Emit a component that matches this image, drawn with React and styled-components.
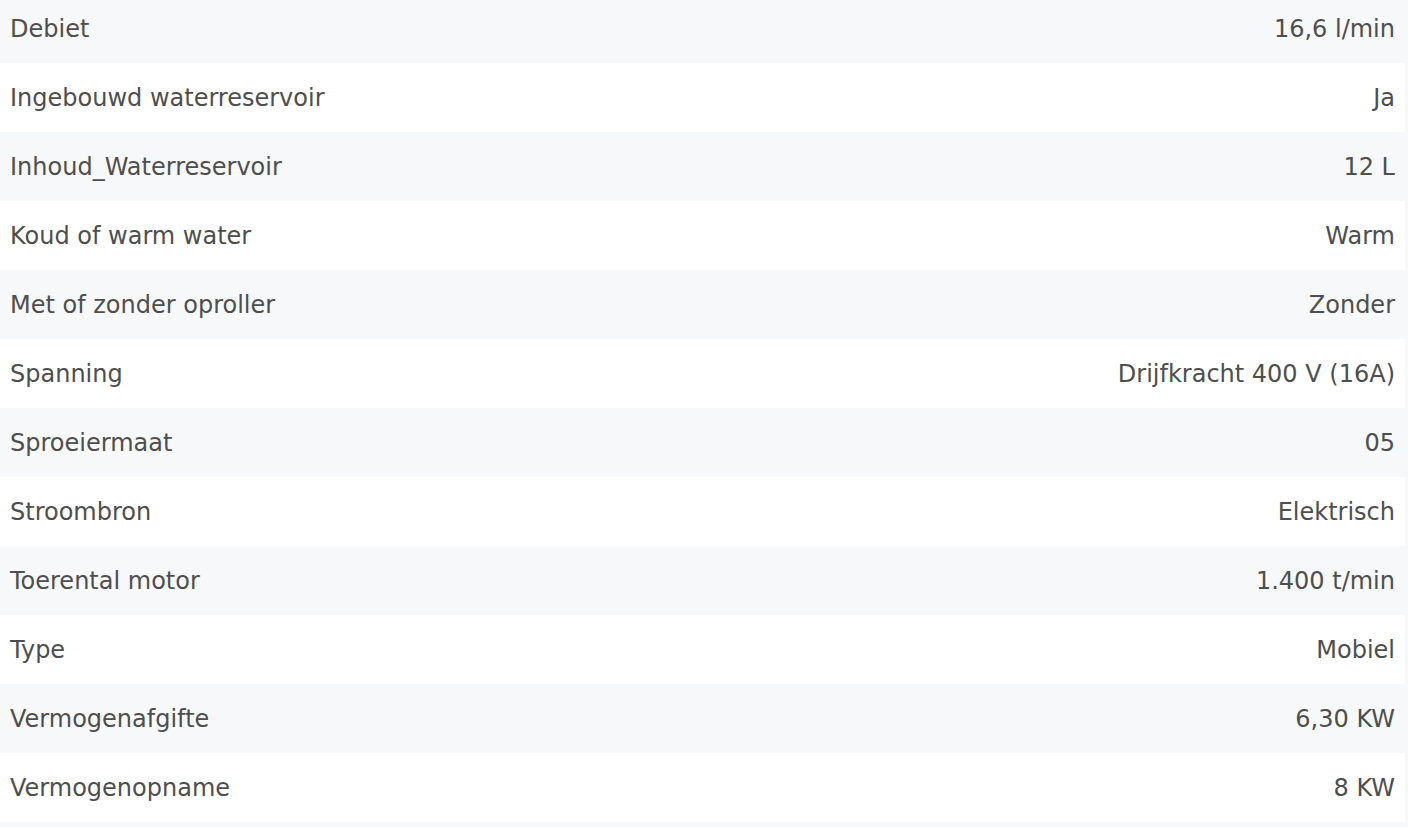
import React from "react";
import styled, { createGlobalStyle } from "styled-components";

const specs = [
  ["Debiet", "16,6 l/min"],
  ["Ingebouwd waterreservoir", "Ja"],
  ["Inhoud_Waterreservoir", "12 L"],
  ["Koud of warm water", "Warm"],
  ["Met of zonder oproller", "Zonder"],
  ["Spanning", "Drijfkracht 400 V (16A)"],
  ["Sproeiermaat", "05"],
  ["Stroombron", "Elektrisch"],
  ["Toerental motor", "1.400 t/min"],
  ["Type", "Mobiel"],
  ["Vermogenafgifte", "6,30 KW"],
  ["Vermogenopname", "8 KW"],
];

function App() {
  return (
    <>
      <GlobalStyle />
      <Table>
        {specs.map(([label, value], i) => (
          <Row key={label} $striped={i % 2 === 0}>
            <Label>{label}</Label>
            <Value>{value}</Value>
          </Row>
        ))}
      </Table>
    </>
  );
}

export default App;

const GlobalStyle = createGlobalStyle`
  html, body {
    margin: 0;
    padding: 0;
    background: #f7f8fa;
    overflow: hidden;
  }
`;

const Table = styled.div`
  display: flex;
  flex-direction: column;
  width: 1405px;
  margin-top: -6px;
  font-family: "DejaVu Sans", sans-serif;
  font-size: 24px;
  color: #4e4e4e;
`;

const Row = styled.div`
  display: flex;
  align-items: center;
  justify-content: space-between;
  height: 69px;
  padding: 0 10px;
  box-sizing: border-box;
  background: ${(p) => (p.$striped ? "#f7f8fa" : "#ffffff")};
`;

const Label = styled.span`
  white-space: nowrap;
`;

const Value = styled.span`
  white-space: nowrap;
  text-align: right;
`;
